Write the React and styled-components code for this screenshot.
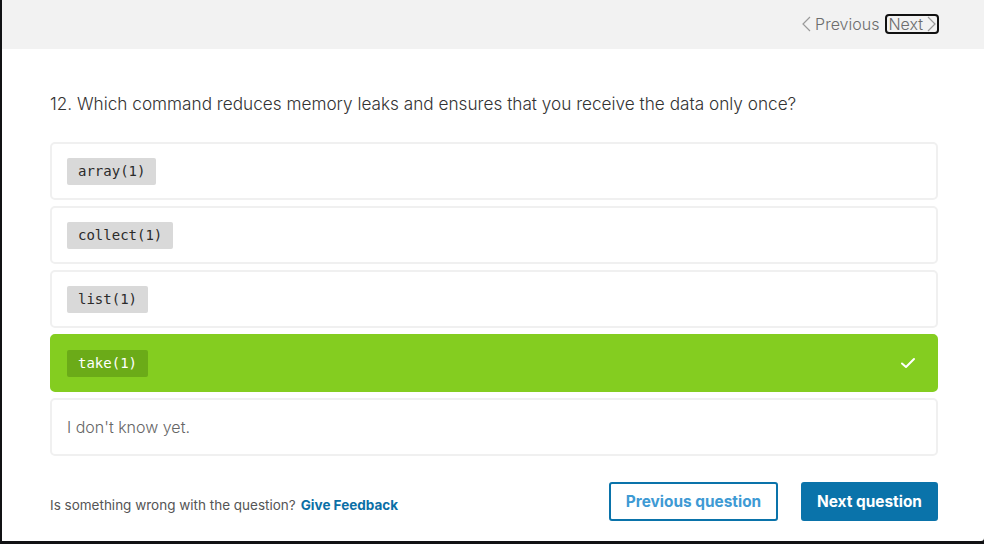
import React from "react";
import styled, { createGlobalStyle } from "styled-components";

const Global = createGlobalStyle`
  html, body { margin: 0; padding: 0; background: #111214; }
  body { font-family: "Inter", "Lato", sans-serif; }
  #root { width: 984px; height: 544px; }
`;

const Frame = styled.div`
  width: 982px;
  height: 541px;
  margin-left: 2px;
  background: #ffffff;
  border-bottom-right-radius: 3px;
  display: flex;
  flex-direction: column;
  overflow: hidden;
`;

const TopBar = styled.div`
  height: 49px;
  background: #f2f2f2;
  display: flex;
  align-items: center;
  justify-content: flex-end;
  padding-right: 45px;
  padding-bottom: 1px;
  gap: 3px;
  box-sizing: border-box;
`;

const NavLink = styled.span`
  font-size: 16px;
  font-weight: 300;
  color: #6d6d6d;
  display: inline-flex;
  align-items: center;
  gap: 4px;
  padding: 0 1px;
  border: ${(p) => (p.$focused ? "2px solid #111" : "2px solid transparent")};
  border-radius: 4px;
  line-height: 15px;
`;

const Content = styled.div`
  padding: 0 46px 0 48px;
  display: flex;
  flex-direction: column;
  flex: 1;
`;

const Question = styled.h2`
  margin: 44px 0 0 0;
  font-size: 17.2px;
  font-weight: 300;
  color: #333;
  line-height: 22px;
`;

const Options = styled.div`
  margin-top: 27px;
  display: flex;
  flex-direction: column;
  gap: 6px;
`;

const Option = styled.div`
  height: 58px;
  box-sizing: border-box;
  border-radius: 5px;
  border: 2px solid ${(p) => (p.$selected ? "#84cd20" : "#f0f0f0")};
  background: ${(p) => (p.$selected ? "#84cd20" : "#ffffff")};
  display: flex;
  align-items: center;
  justify-content: space-between;
  padding: 0 20px 0 15px;
`;

const Code = styled.code`
  font-family: "DejaVu Sans Mono", "Liberation Mono", monospace;
  font-size: 14px;
  line-height: 27px;
  height: 27px;
  padding: 0 11px;
  border-radius: 2px;
  background: ${(p) => (p.$selected ? "#6bab18" : "#d9d9d9")};
  color: ${(p) => (p.$selected ? "#ffffff" : "#2b2b2b")};
`;

const Plain = styled.span`
  font-size: 16px;
  font-weight: 300;
  color: #666;
`;

const Footer = styled.div`
  margin-top: 26px;
  display: flex;
  align-items: center;
  justify-content: space-between;
`;

const Feedback = styled.p`
  margin: 6px 0 0 0;
  font-size: 13.5px;
  color: #555;
`;

const FeedbackLink = styled.a`
  color: #0b6fa6;
  font-weight: 700;
  text-decoration: none;
  margin-left: 5px;
`;

const Buttons = styled.div`
  display: flex;
  gap: 23px;
`;

const Button = styled.button`
  height: 39px;
  box-sizing: border-box;
  border-radius: 3px;
  font-family: "Inter", sans-serif;
  font-size: 15.4px;
  font-weight: 700;
  padding: 0;
  border: 2px solid #0a73aa;
  background: ${(p) => (p.$primary ? "#0a73aa" : "#ffffff")};
  color: ${(p) => (p.$primary ? "#ffffff" : "#3e9ad4")};
  width: ${(p) => p.$w}px;
`;

const Check = () => (
  <svg width="16" height="14" viewBox="0 0 16 14">
    <path d="M2 7.5 L6 11 L14 3" fill="none" stroke="#fff" strokeWidth="2" strokeLinecap="round" strokeLinejoin="round" />
  </svg>
);

const Chevron = ({ dir }) => (
  <svg width="9" height="16" viewBox="0 0 9 16">
    <path
      d={dir === "left" ? "M8 1 L1 8 L8 15" : "M1 1 L8 8 L1 15"}
      fill="none"
      stroke="#9a9a9a"
      strokeWidth="1.2"
    />
  </svg>
);

const options = [
  { code: "array(1)" },
  { code: "collect(1)" },
  { code: "list(1)" },
  { code: "take(1)", selected: true },
  { text: "I don't know yet." },
];

export default function App() {
  return (
    <>
      <Global />
      <Frame>
        <TopBar>
          <NavLink>
            <Chevron dir="left" />
            Previous
          </NavLink>
          <NavLink $focused>
            Next
            <Chevron dir="right" />
          </NavLink>
        </TopBar>
        <Content>
          <Question>12. Which command reduces memory leaks and ensures that you receive the data only once?</Question>
          <Options>
            {options.map((o, i) => (
              <Option key={i} $selected={o.selected}>
                {o.code ? <Code $selected={o.selected}>{o.code}</Code> : <Plain>{o.text}</Plain>}
                {o.selected && <Check />}
              </Option>
            ))}
          </Options>
          <Footer>
            <Feedback>
              Is something wrong with the question?
              <FeedbackLink href="#">Give Feedback</FeedbackLink>
            </Feedback>
            <Buttons>
              <Button $w={169}>Previous question</Button>
              <Button $primary $w={137}>Next question</Button>
            </Buttons>
          </Footer>
        </Content>
      </Frame>
    </>
  );
}
